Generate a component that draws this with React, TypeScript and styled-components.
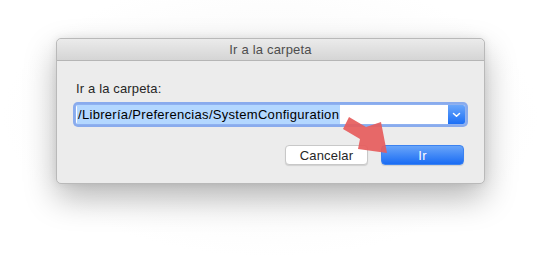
import styled, { createGlobalStyle } from "styled-components";

const GlobalStyle = createGlobalStyle`
	html, body {
		margin: 0;
		padding: 0;
		background: #ffffff;
		font-family: "Liberation Sans", Arial, sans-serif;
	}
`;

function App() {
	return (
		<Page>
			<GlobalStyle />
			<Window>
				<TitleBar>Ir a la carpeta</TitleBar>
				<Body>
					<Label>Ir a la carpeta:</Label>
					<Field>
						<FieldText>
							<Selected>/Librería/Preferencias/SystemConfiguration</Selected>
						</FieldText>
						<DropButton>
							<svg width="9" height="6" viewBox="0 0 9 6">
								<path
									d="M1.5 1.5 L4.5 4.3 L7.5 1.5"
									fill="none"
									stroke="#fff"
									strokeWidth="1.5"
									strokeLinecap="round"
									strokeLinejoin="round"
								/>
							</svg>
						</DropButton>
					</Field>
					<Buttons>
						<Button>Cancelar</Button>
						<Button primary>Ir</Button>
					</Buttons>
				</Body>
				{/* red pointer drawn over the dialog */}
				<Arrow width="44" height="36" viewBox="0 0 44 36">
					<polygon
						points="6,0 23,10 38,5 44,36 15,32 17,22 0,12"
						fill="rgba(230, 92, 92, 0.92)"
					/>
				</Arrow>
			</Window>
		</Page>
	);
}

const Page = styled.div`
	width: 541px;
	height: 258px;
	padding: 38px 0 0 56px;
	box-sizing: border-box;
	background: radial-gradient(ellipse at 50% 45%, #f6f6f6 0%, #ffffff 70%);
`;

const Window = styled.div`
	position: relative;
	width: 429px;
	height: 146px;
	box-sizing: border-box;
	background: #ececec;
	border: 1px solid #b9b9b9;
	border-radius: 5px;
	box-shadow: 0 14px 32px rgba(0, 0, 0, 0.28), 0 0 8px rgba(0, 0, 0, 0.08);
	display: flex;
	flex-direction: column;
`;

const TitleBar = styled.div`
	height: 21px;
	border-bottom: 1px solid #b5b5b5;
	border-radius: 5px 5px 0 0;
	background: linear-gradient(#ebebeb, #d5d5d5);
	display: flex;
	align-items: center;
	justify-content: center;
	font-size: 13px;
	color: #4d4d4d;
	letter-spacing: 0.2px;
`;

const Body = styled.div`
	padding: 20px 19px 0 19px;
	display: flex;
	flex-direction: column;
`;

const Label = styled.div`
	font-size: 13px;
	line-height: 16px;
	color: #262626;
	letter-spacing: 0.15px;
`;

const Field = styled.div`
	margin-top: 8px;
	height: 19px;
	width: 389px;
	background: #ffffff;
	border-radius: 2px;
	box-shadow: 0 0 0 1px #8fb1f0, 0 0 0 3px rgba(104, 150, 238, 0.75);
	display: flex;
	align-items: stretch;
`;

const FieldText = styled.div`
	flex: 1;
	display: flex;
	align-items: stretch;
	padding-left: 1px;
	overflow: hidden;
`;

const Selected = styled.span`
	background: #b3d7ff;
	color: #000;
	font-size: 13px;
	line-height: 19px;
	letter-spacing: 0.3px;
	padding: 0 1px 0 1px;
	white-space: nowrap;
`;

const DropButton = styled.div`
	width: 17px;
	background: linear-gradient(#6aa6fa, #1b6ff6);
	border-radius: 0 2px 2px 0;
	display: flex;
	align-items: center;
	justify-content: center;
`;

const Buttons = styled.div`
	margin-top: 21px;
	display: flex;
	justify-content: flex-end;
	gap: 13px;
	padding-right: 1px;
`;

const Button = styled.div<{ primary?: boolean }>`
	width: 83px;
	height: 20px;
	box-sizing: border-box;
	border-radius: 4px;
	display: flex;
	align-items: center;
	justify-content: center;
	font-size: 13px;
	letter-spacing: 0.2px;
	color: ${(p) => (p.primary ? "#ffffff" : "#262626")};
	background: ${(p) =>
		p.primary ? "linear-gradient(#69a5f9, #1a6cf4)" : "#ffffff"};
	border: 1px solid ${(p) => (p.primary ? "#3c82f0" : "#c8c8c8")};
	box-shadow: 0 1px 1px rgba(0, 0, 0, 0.12);
`;

const Arrow = styled.svg`
	position: absolute;
	left: 286px;
	top: 78px;
	overflow: visible;
`;

export default App;
